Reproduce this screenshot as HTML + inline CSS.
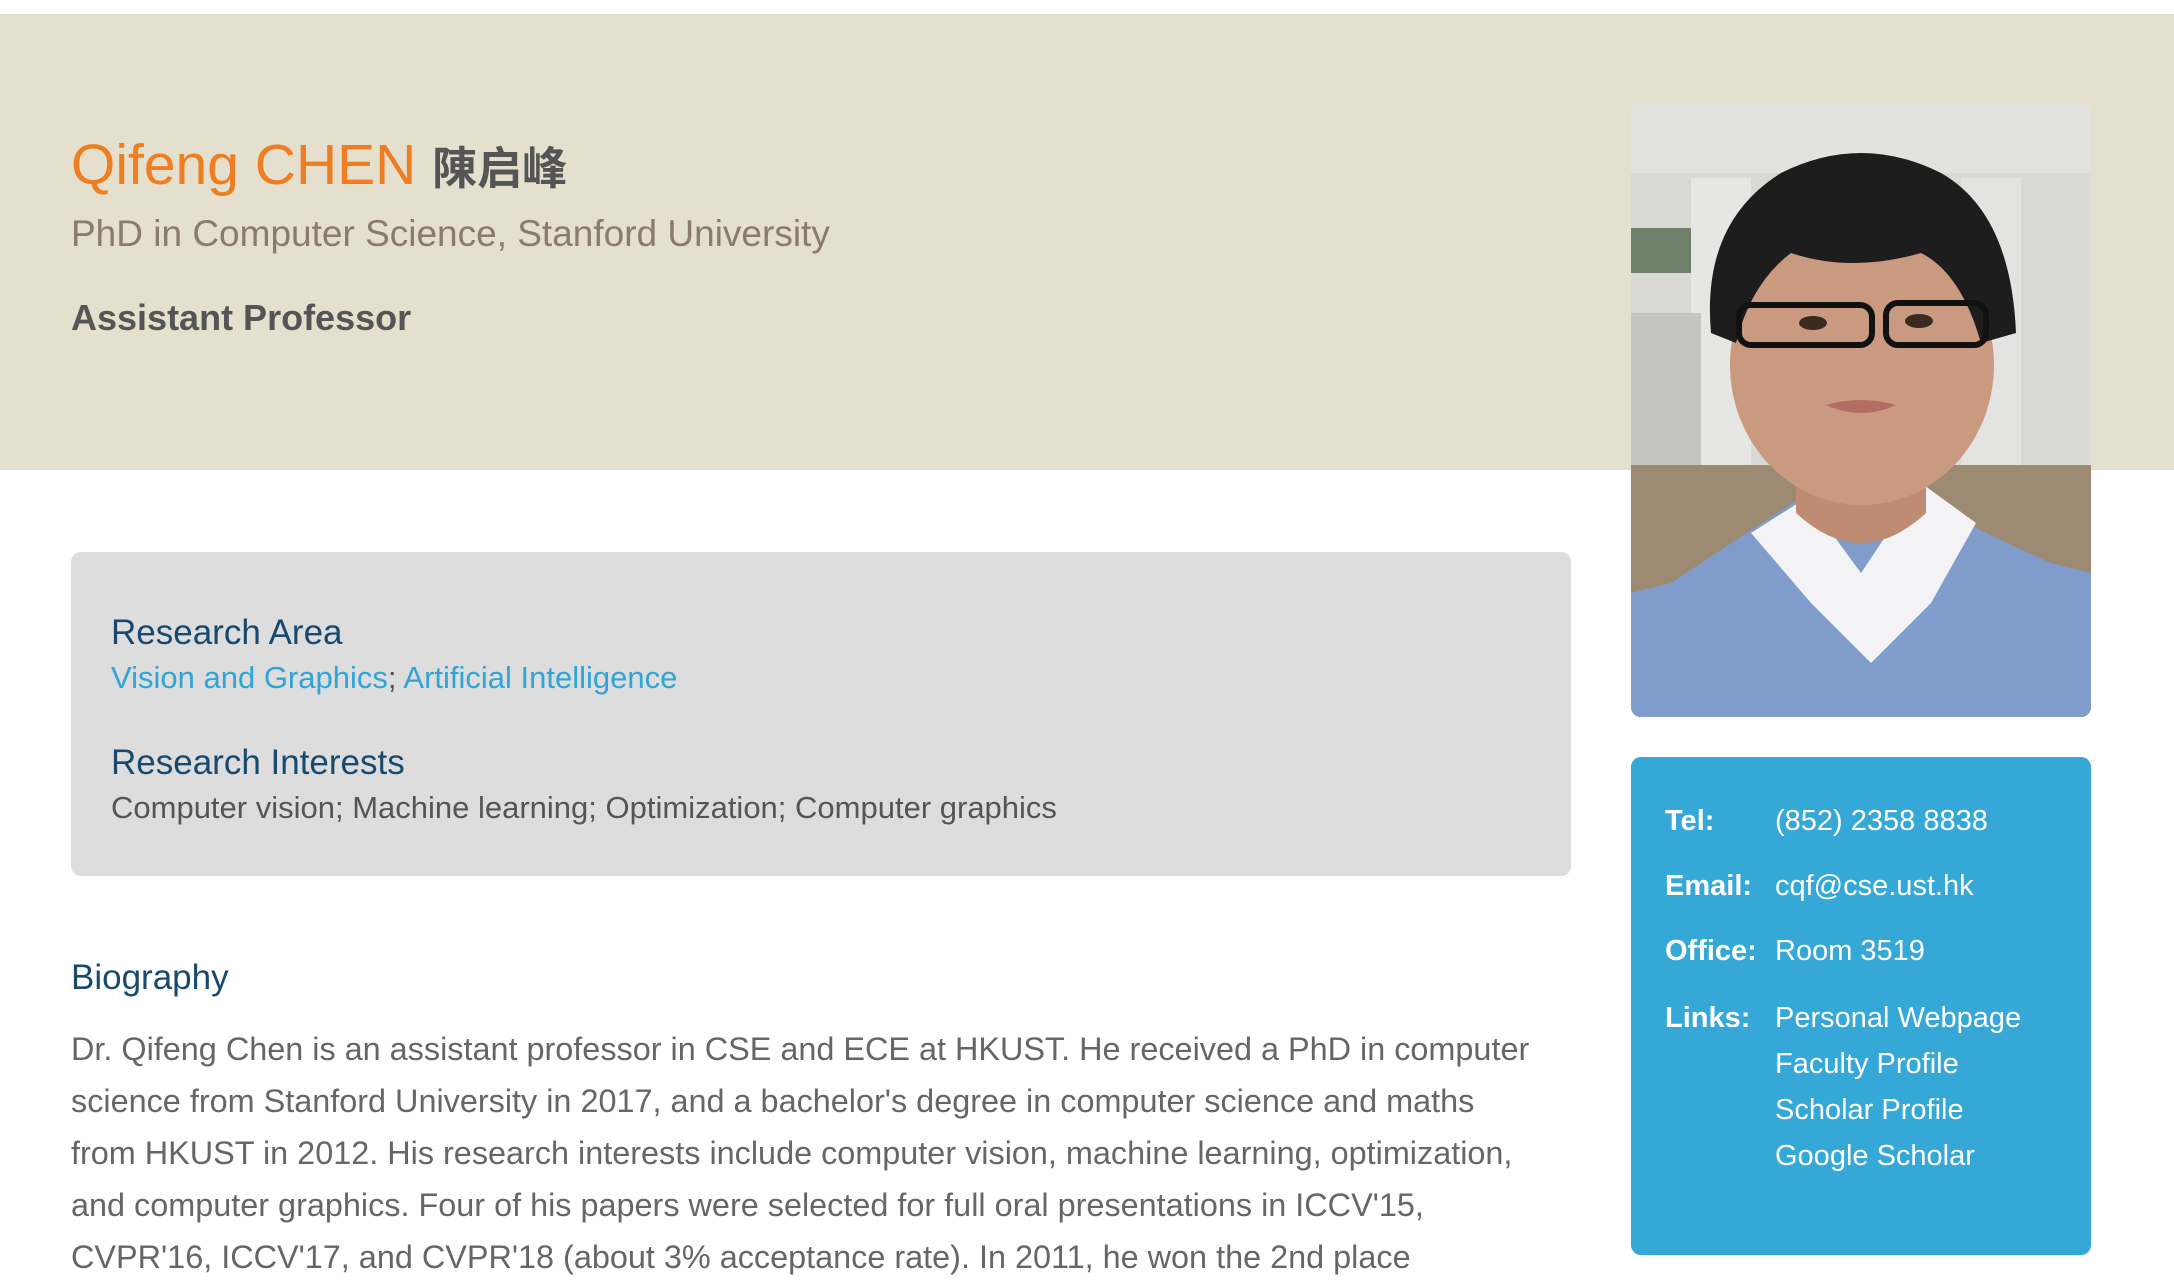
<!DOCTYPE html>
<html><head><meta charset="utf-8">
<style>
*{margin:0;padding:0;box-sizing:border-box}
body{width:2174px;height:1286px;overflow:hidden;background:#fff;font-family:"Liberation Sans","Noto Sans CJK TC",sans-serif;position:relative}
.band{position:absolute;left:0;top:14px;width:2174px;height:456px;background:#e5dfce}
.abs{position:absolute;white-space:nowrap}
.name{left:71px;top:132px;font-size:57px;color:#ef7d22}
.name span{color:#555;font-size:45px;font-weight:bold;font-family:"Noto Sans CJK TC",sans-serif}
.deg{left:71px;top:213px;font-size:37px;color:#8a7b6a}
.pos{left:71px;top:297px;font-size:36px;color:#555;font-weight:bold}
.box{position:absolute;left:71px;top:552px;width:1500px;height:324px;background:#dddddd;border-radius:10px}
.h{color:#18496e;font-size:35px}
.t{font-size:31px;color:#555}
.lk{color:#2fa4d6}
.bio{left:71px;top:1023px;font-size:32.4px;color:#666;line-height:52px}
.photo{position:absolute;left:1631px;top:103px;width:460px;height:614px;border-radius:10px;overflow:hidden}
.card{position:absolute;left:1631px;top:757px;width:460px;height:498px;background:#35a8d8;border-radius:10px;color:#fff;font-size:29px}
.card .l{position:absolute;left:34px;font-weight:bold}
.card .v{position:absolute;left:144px}
</style></head><body>
<div class="band"></div>
<div class="abs name">Qifeng CHEN <span>陳启峰</span></div>
<div class="abs deg">PhD in Computer Science, Stanford University</div>
<div class="abs pos">Assistant Professor</div>
<div class="box">
<div class="abs h" style="left:40px;top:61px">Research Area</div>
<div class="abs t" style="left:40px;top:108px"><span class="lk">Vision and Graphics</span>; <span class="lk">Artificial Intelligence</span></div>
<div class="abs h" style="left:40px;top:191px">Research Interests</div>
<div class="abs t" style="left:40px;top:238px">Computer vision; Machine learning; Optimization; Computer graphics</div>
</div>
<div class="abs h" style="left:71px;top:958px">Biography</div>
<div class="abs bio">Dr. Qifeng Chen is an assistant professor in CSE and ECE at HKUST. He received a PhD in computer<br>science from Stanford University in 2017, and a bachelor's degree in computer science and maths<br>from HKUST in 2012. His research interests include computer vision, machine learning, optimization,<br>and computer graphics. Four of his papers were selected for full oral presentations in ICCV'15,<br>CVPR'16, ICCV'17, and CVPR'18 (about 3% acceptance rate). In 2011, he won the 2nd place</div>
<div class="photo">
<svg width="460" height="614" viewBox="0 0 460 614">
<rect width="460" height="614" fill="#d9d9d6"/>
<rect x="0" y="0" width="460" height="70" fill="#e2e2df"/>
<rect x="60" y="75" width="60" height="290" fill="#e6e6e4"/>
<rect x="330" y="75" width="60" height="290" fill="#e3e3e1"/>
<rect x="0" y="125" width="60" height="45" fill="#6f7f6a"/>
<rect x="0" y="210" width="70" height="155" fill="#c4c4c0"/>
<rect x="0" y="362" width="460" height="252" fill="#9c8a72"/>
<path d="M40 480 Q130 420 170 395 L290 395 Q330 420 420 460 L460 470 L460 614 L0 614 L0 490Z" fill="#7f9ccb"/>
<path d="M120 430 L175 395 L230 470 L290 380 L345 420 L300 500 L240 560 L180 500Z" fill="#f3f3f6"/>
<path d="M165 330 L165 410 Q230 470 295 410 L295 330Z" fill="#bd8c72"/>
<ellipse cx="231" cy="262" rx="132" ry="140" fill="#c99a80"/>
<path d="M80 230 Q70 120 150 70 Q230 30 310 70 Q380 110 385 230 L350 240 Q330 170 290 150 Q220 170 160 150 Q120 180 105 240Z" fill="#1d1d1d"/>
<rect x="108" y="202" width="133" height="40" rx="12" fill="none" stroke="#111" stroke-width="6"/>
<rect x="255" y="200" width="100" height="42" rx="12" fill="none" stroke="#111" stroke-width="6"/>
<ellipse cx="182" cy="220" rx="14" ry="7" fill="#3a2a22"/>
<ellipse cx="288" cy="218" rx="14" ry="7" fill="#3a2a22"/>
<path d="M195 302 Q230 292 265 302 Q230 318 195 302Z" fill="#b36e64"/>
</svg>
</div>
<div class="card">
<div class="l" style="top:48px">Tel:</div><div class="v" style="top:48px">(852) 2358 8838</div>
<div class="l" style="top:113px">Email:</div><div class="v" style="top:113px">cqf@cse.ust.hk</div>
<div class="l" style="top:178px">Office:</div><div class="v" style="top:178px">Room 3519</div>
<div class="l" style="top:245px">Links:</div><div class="v" style="top:245px">Personal Webpage</div>
<div class="v" style="top:291px">Faculty Profile</div>
<div class="v" style="top:337px">Scholar Profile</div>
<div class="v" style="top:383px">Google Scholar</div>
</div>
</body></html>
